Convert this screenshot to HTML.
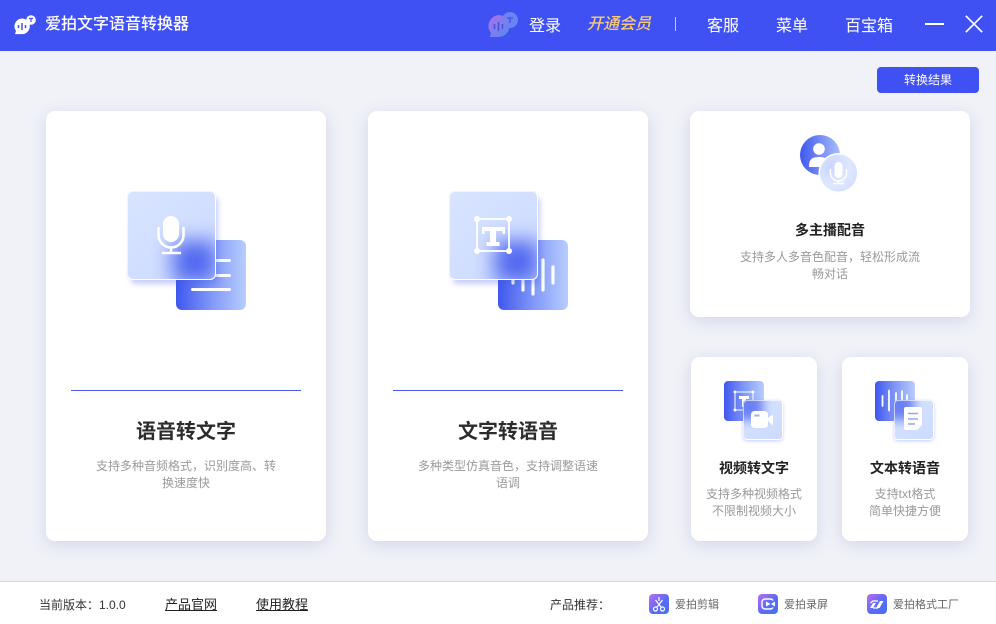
<!DOCTYPE html>
<html lang="zh">
<head>
<meta charset="utf-8">
<title>爱拍文字语音转换器</title>
<style>
*{box-sizing:border-box;margin:0;padding:0}
html,body{width:996px;height:624px;overflow:hidden}
body{position:relative;background:#f0f2f8;font-family:"Liberation Sans","Noto Sans CJK SC",sans-serif;color:#333}
.a{position:absolute;white-space:nowrap}
.hdr{left:0;top:0;width:996px;height:51px;background:#4051f3}
.nav{color:#fff;font-size:16px;line-height:24px;top:15px}
.card{position:absolute;background:#fff;border-radius:9px;box-shadow:0 4px 16px rgba(80,90,170,.18)}
.rule{height:1px;background:#4a58ee;top:390px;width:230px}
.t1{font-size:20px;font-weight:700;color:#2c2c2c;line-height:28px;text-align:center;width:280px;top:418px}
.d{font-size:12px;color:#9a9a9a;line-height:17px;text-align:center}
.t2{font-size:14px;font-weight:700;color:#222;line-height:20px;text-align:center}
.back{position:absolute;background:linear-gradient(90deg,#3f57ee 0%,#7f97f8 50%,#b9cdff 100%)}
.glass{position:absolute;overflow:hidden;background:linear-gradient(140deg,#d8e4ff,#cbdaff)}
.glass i{position:absolute;display:block;background:#3f57ee}
.big{width:89px;height:89px;border-radius:6px}
.big i{left:46px;top:50px;width:44px;height:42px;filter:blur(10px);opacity:.88}
.bigwrap{position:absolute;width:89px;height:89px;border-radius:6px;box-shadow:3px 5px 6px -1px rgba(70,85,225,.3)}
.edge{position:absolute;left:0;top:0;width:100%;height:100%;border-radius:inherit;border:1px solid;border-color:rgba(255,255,255,.6) #fff #fff rgba(255,255,255,.6)}
.sm{width:40px;height:40px;border-radius:4px}
.sm i{left:-12px;top:-12px;width:32px;height:32px;filter:blur(5px);opacity:.7}
.smwrap{position:absolute;width:40px;height:40px;border-radius:4px;box-shadow:0 1px 3px rgba(70,85,225,.3)}
.foot{left:0;top:581px;width:996px;height:43px;background:#fff;border-top:1px solid #d6d6da}
.f{font-size:12px;line-height:18px;top:596px;color:#333}
.u{font-size:13px;line-height:18px;top:596px;color:#222;text-decoration:underline}
.g{font-size:11px;line-height:18px;top:596px;color:#666}
svg{position:absolute;overflow:visible}
</style>
</head>
<body>
<div class="a hdr"></div>

<svg style="left:13px;top:14px" width="24" height="22" viewBox="0 0 24 22">
<circle cx="18" cy="6" r="4.800" fill="#fff"/>
<path d="M16 4.500h4M18 4.500v3.500" stroke="#4051f3" stroke-width="1.200" fill="none"/>
<path d="M9 4.500a7.800 7.800 0 0 1 0 15.600H2l1-3.200A7.800 7.800 0 0 1 9 4.500z" fill="#fff"/>
<path d="M5.500 11v3M9 9v7M12.500 11v3" stroke="#4051f3" stroke-width="1.500"/>
</svg>
<div class="a" style="left:45px;top:12px;font-size:16px;line-height:25px;color:#fff;font-weight:500">爱拍文字语音转换器</div>

<svg style="left:487px;top:12px" width="34" height="26" viewBox="0 0 34 26">
<defs><linearGradient id="lg" x1="0" y1="0" x2="1" y2="1"><stop offset="0" stop-color="#b36ee8"/><stop offset="1" stop-color="#4f8cf0"/></linearGradient></defs>
<circle cx="23" cy="8" r="8" fill="#6a84f4"/>
<path d="M20 6h6M23 6v5" stroke="#3f51e8" stroke-width="1.300" fill="none"/>
<path d="M11.500 3a11 11 0 0 1 0 22H3l1-4A11 11 0 0 1 11.500 3z" fill="url(#lg)"/>
<path d="M7.500 12v5M11.500 10v9M15.500 12v5" stroke="#4251d8" stroke-width="1.500"/>
</svg>
<div class="a nav" style="left:529px">登录</div>
<div class="a nav" style="left:587px;top:13px;color:#f6cb7c;font-style:italic;font-weight:500">开通会员</div>
<div class="a" style="left:675px;top:17px;width:1px;height:14px;background:#c5cbfa"></div>
<div class="a nav" style="left:707px">客服</div>
<div class="a nav" style="left:776px">菜单</div>
<div class="a nav" style="left:845px">百宝箱</div>
<div class="a" style="left:925px;top:23px;width:19px;height:2px;background:#fff"></div>
<svg style="left:965px;top:15px" width="18" height="18" viewBox="0 0 18 18"><path d="M.8.800L17.200 17.200M17.200.800L.8 17.200" stroke="#fff" stroke-width="1.700"/></svg>

<div class="a" style="left:877px;top:67px;width:102px;height:26px;background:#4051f3;border-radius:4px;color:#fff;font-size:12px;line-height:26px;text-align:center">转换结果</div>

<!-- Card 1 -->
<div class="card" style="left:46px;top:111px;width:280px;height:430px"></div>
<div class="back" style="left:176px;top:240px;width:70px;height:70px;border-radius:6px"></div>
<div class="a" style="left:192px;top:259px;width:39px;height:3px;background:#fff;border-radius:2px"></div>
<div class="a" style="left:192px;top:274px;width:39px;height:3px;background:#fff;border-radius:2px"></div>
<div class="a" style="left:191px;top:288px;width:40px;height:3px;background:#fff;border-radius:2px"></div>
<div class="bigwrap" style="left:127px;top:191px"><div class="glass big" style="position:absolute;left:0;top:0"><i></i></div><div class="edge"></div></div>
<svg style="left:157px;top:216px" width="28" height="38" viewBox="0 0 28 38" fill="none" stroke="#fff">
<rect x="6" y="0" width="16" height="26" rx="8" fill="#fff" stroke="none"/>
<path d="M1.500 12v7a12.500 12.500 0 0 0 25 0v-7" stroke-width="2.600" stroke-linecap="round"/>
<path d="M14 31v6M5 37h19" stroke-width="2.400"/>
</svg>
<div class="a rule" style="left:71px"></div>
<div class="a t1" style="left:46px">语音转文字</div>
<div class="a d" style="left:46px;top:458px;width:280px">支持多种音频格式，识别度高、转<br>换速度快</div>

<!-- Card 2 -->
<div class="card" style="left:368px;top:111px;width:280px;height:430px"></div>
<div class="back" style="left:498px;top:240px;width:70px;height:70px;border-radius:6px"></div>
<svg style="left:510px;top:258px" width="50" height="42" viewBox="0 0 50 42" stroke="#fff" stroke-width="3.200" stroke-linecap="round">
<path d="M3 15v10M13 12v20M23 6v30M33 2v30M43 9v16"/>
</svg>
<div class="bigwrap" style="left:449px;top:191px"><div class="glass big" style="position:absolute;left:0;top:0"><i></i></div><div class="edge"></div></div>
<svg style="left:474px;top:216px" width="38" height="38" viewBox="0 0 38 38">
<rect x="3" y="3" width="32" height="32" fill="none" stroke="#fff" stroke-width="1.800"/>
<circle cx="3" cy="3" r="3" fill="#fff"/><circle cx="35" cy="3" r="3" fill="#fff"/><circle cx="3" cy="35" r="3" fill="#fff"/><circle cx="35" cy="35" r="3" fill="#fff"/>
<path d="M8 11h23v7h-2.500v-3H22v11h3.500v4h-13v-4H16V15H10.500v3H8z" fill="#fff"/>
</svg>
<div class="a rule" style="left:393px"></div>
<div class="a t1" style="left:368px">文字转语音</div>
<div class="a d" style="left:368px;top:458px;width:280px">多种类型仿真音色，支持调整语速<br>语调</div>

<!-- Card 3 -->
<div class="card" style="left:690px;top:111px;width:280px;height:206px"></div>
<svg style="left:798px;top:133px" width="64" height="64" viewBox="0 0 64 64">
<defs>
<linearGradient id="c1" x1="0" y1="0" x2="1" y2="0"><stop offset="0" stop-color="#3f57ee"/><stop offset="1" stop-color="#a9bffc"/></linearGradient>
<radialGradient id="c2" cx=".3" cy=".3" r=".85"><stop offset="0" stop-color="#c9d7fd"/><stop offset=".6" stop-color="#dfe7ff"/><stop offset="1" stop-color="#cfdcff"/></radialGradient>
</defs>
<circle cx="22" cy="22" r="20" fill="url(#c1)"/>
<circle cx="21" cy="16" r="5.800" fill="#fff"/>
<path d="M11 34c0-8 3-10 10-10s10 2 10 10z" fill="#fff"/>
<circle cx="40.500" cy="40" r="20" fill="#4f67ea" opacity=".2"/>
<circle cx="40.500" cy="40" r="19.300" fill="url(#c2)" stroke="#fff" stroke-width="1.500"/>
<rect x="36.500" y="29" width="8" height="16" rx="4" fill="#fff"/>
<path d="M32.500 36v4a8 8 0 0 0 16 0v-4M40.500 48v2M35 50.500h11" fill="none" stroke="#fff" stroke-width="1.400"/>
</svg>
<div class="a t2" style="left:690px;top:220px;width:280px">多主播配音</div>
<div class="a d" style="left:690px;top:249px;width:280px">支持多人多音色配音，轻松形成流<br>畅对话</div>

<!-- Card 4 -->
<div class="card" style="left:691px;top:357px;width:126px;height:184px"></div>
<div class="back" style="left:724px;top:381px;width:40px;height:40px;border-radius:4px"></div>
<svg style="left:733px;top:390px" width="22" height="22" viewBox="0 0 22 22">
<rect x="2" y="2" width="18" height="18" fill="none" stroke="#fff"/>
<circle cx="2" cy="2" r="1.500" fill="#fff"/><circle cx="20" cy="2" r="1.500" fill="#fff"/><circle cx="2" cy="20" r="1.500" fill="#fff"/><circle cx="20" cy="20" r="1.500" fill="#fff"/>
<path d="M6 6h10v3h-3v8H9V9H6z" fill="#fff"/>
</svg>
<div class="smwrap" style="left:743px;top:400px"><div class="glass sm" style="position:absolute;left:0;top:0"><i></i></div><div class="edge"></div></div>
<svg style="left:751px;top:410px" width="24" height="20" viewBox="0 0 24 20">
<rect x="0" y="1" width="17" height="17" rx="3.500" fill="#fff"/>
<path d="M17 8l5-3.500v11L17 11z" fill="#fff"/>
<rect x="3.500" y="4.500" width="5" height="2" fill="#98aef5"/>
</svg>
<div class="a t2" style="left:691px;top:458px;width:126px">视频转文字</div>
<div class="a d" style="left:691px;top:486px;width:126px">支持多种视频格式<br>不限制视频大小</div>

<!-- Card 5 -->
<div class="card" style="left:842px;top:357px;width:126px;height:184px"></div>
<div class="back" style="left:875px;top:381px;width:40px;height:40px;border-radius:4px"></div>
<svg style="left:881px;top:389px" width="30" height="24" viewBox="0 0 30 24" stroke="#fff" stroke-width="1.800" stroke-linecap="round">
<path d="M1.500 7v10M8 1.500v20M15 4v13M21 2v12M26 6v5"/>
</svg>
<div class="smwrap" style="left:894px;top:400px"><div class="glass sm" style="position:absolute;left:0;top:0"><i></i></div><div class="edge"></div></div>
<svg style="left:904px;top:407px" width="18" height="24" viewBox="0 0 18 24">
<path d="M2 0h14a2 2 0 0 1 2 2v16l-5 5H2a2 2 0 0 1-2-2V2a2 2 0 0 1 2-2z" fill="#fff"/>
<path d="M4 6.500h10M4 12h10M4 17h7" stroke="#8fa6f3" stroke-width="1.500"/>
</svg>
<div class="a t2" style="left:842px;top:458px;width:126px">文本转语音</div>
<div class="a d" style="left:842px;top:486px;width:126px">支持txt格式<br>简单快捷方便</div>

<!-- Footer -->
<div class="a foot"></div>
<div class="a f" style="left:39px">当前版本：1.0.0</div>
<div class="a u" style="left:165px">产品官网</div>
<div class="a u" style="left:256px">使用教程</div>
<div class="a f" style="left:550px;color:#333">产品推荐：</div>

<svg style="left:649px;top:594px" width="20" height="20" viewBox="0 0 20 20">
<defs><linearGradient id="p" x1="0" y1="0" x2="1" y2="1"><stop offset="0" stop-color="#bb6df0"/><stop offset=".55" stop-color="#5a6cf5"/><stop offset="1" stop-color="#4471ee"/></linearGradient></defs>
<rect width="20" height="20" rx="4" fill="url(#p)"/>
<path d="M10 3v4M6.500 6L12 13M13.500 6L8 13" stroke="#fff" stroke-width="1.200"/>
<circle cx="6.500" cy="15" r="2" fill="none" stroke="#fff" stroke-width="1.200"/><circle cx="13.500" cy="15" r="2" fill="none" stroke="#fff" stroke-width="1.200"/>
</svg>
<div class="a g" style="left:675px">爱拍剪辑</div>
<svg style="left:758px;top:594px" width="20" height="20" viewBox="0 0 20 20">
<rect width="20" height="20" rx="4" fill="url(#p)"/>
<path d="M15 6.500A3 3 0 0 0 12.500 5H7a3 3 0 0 0-3 3v4a3 3 0 0 0 3 3h5.500a3 3 0 0 0 2.500-1.500" fill="none" stroke="#fff" stroke-width="1.400"/>
<path d="M8 7.500l4.500 2.500L8 12.500zM13 10l4-2.500v5z" fill="#fff"/>
</svg>
<div class="a g" style="left:784px">爱拍录屏</div>
<svg style="left:867px;top:594px" width="20" height="20" viewBox="0 0 20 20">
<rect width="20" height="20" rx="4" fill="url(#p)"/>
<path d="M3 14l3-5h3l-3 5zM9 14l4-7h3.500l-4 7z" fill="#fff"/>
<path d="M3.500 9l2.500-2h5M6 14h5" stroke="#fff" stroke-width="1.200" fill="none"/>
</svg>
<div class="a g" style="left:893px">爱拍格式工厂</div>
</body>
</html>
